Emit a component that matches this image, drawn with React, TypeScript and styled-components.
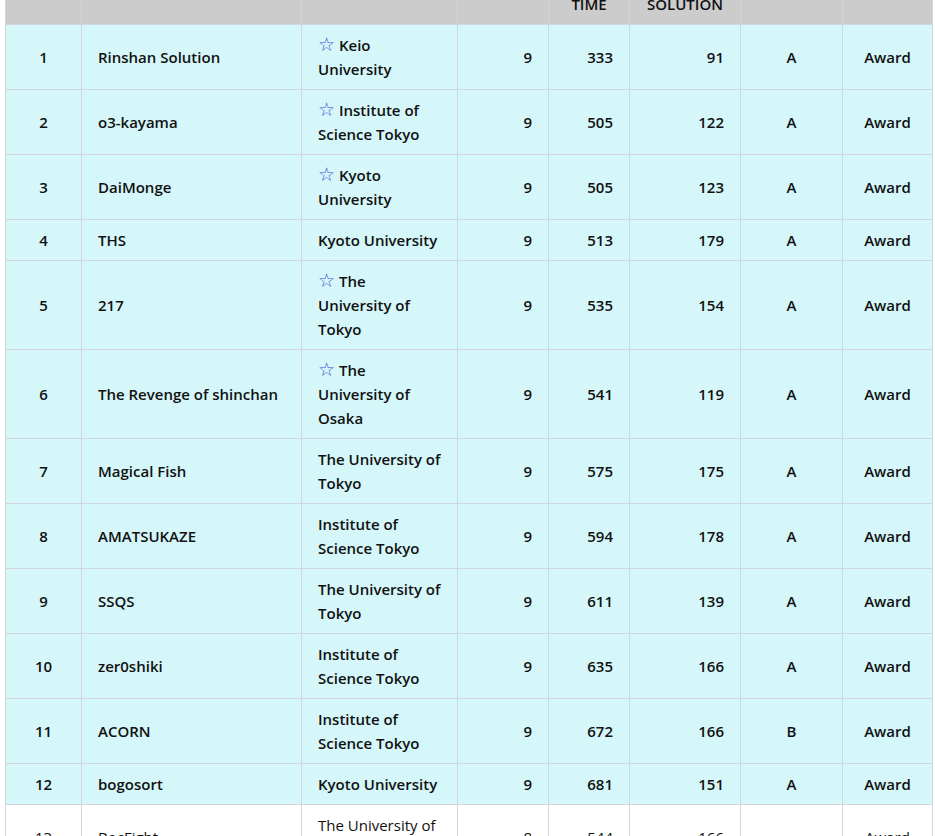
import React from "react";
import styled, { createGlobalStyle } from "styled-components";

const GlobalStyle = createGlobalStyle`
  html, body { margin: 0; padding: 0; background: #ffffff; }
  body {
    font-family: "Open Sans", "Noto Sans", sans-serif;
    font-size: 15px;
    color: #111111;
    overflow: hidden;
  }
`;

type Align = "left" | "right" | "center";

interface Team {
  rank: number;
  name: string;
  university: string;
  starred: boolean;
  solved: number;
  time: number;
  last: number;
  grade: string;
  award: string;
  highlight: boolean;
}

const teams: Team[] = [
  { rank: 1, name: "Rinshan Solution", university: "Keio University", starred: true, solved: 9, time: 333, last: 91, grade: "A", award: "Award", highlight: true },
  { rank: 2, name: "o3-kayama", university: "Institute of Science Tokyo", starred: true, solved: 9, time: 505, last: 122, grade: "A", award: "Award", highlight: true },
  { rank: 3, name: "DaiMonge", university: "Kyoto University", starred: true, solved: 9, time: 505, last: 123, grade: "A", award: "Award", highlight: true },
  { rank: 4, name: "THS", university: "Kyoto University", starred: false, solved: 9, time: 513, last: 179, grade: "A", award: "Award", highlight: true },
  { rank: 5, name: "217", university: "The University of Tokyo", starred: true, solved: 9, time: 535, last: 154, grade: "A", award: "Award", highlight: true },
  { rank: 6, name: "The Revenge of shinchan", university: "The University of Osaka", starred: true, solved: 9, time: 541, last: 119, grade: "A", award: "Award", highlight: true },
  { rank: 7, name: "Magical Fish", university: "The University of Tokyo", starred: false, solved: 9, time: 575, last: 175, grade: "A", award: "Award", highlight: true },
  { rank: 8, name: "AMATSUKAZE", university: "Institute of Science Tokyo", starred: false, solved: 9, time: 594, last: 178, grade: "A", award: "Award", highlight: true },
  { rank: 9, name: "SSQS", university: "The University of Tokyo", starred: false, solved: 9, time: 611, last: 139, grade: "A", award: "Award", highlight: true },
  { rank: 10, name: "zer0shiki", university: "Institute of Science Tokyo", starred: false, solved: 9, time: 635, last: 166, grade: "A", award: "Award", highlight: true },
  { rank: 11, name: "ACORN", university: "Institute of Science Tokyo", starred: false, solved: 9, time: 672, last: 166, grade: "B", award: "Award", highlight: true },
  { rank: 12, name: "bogosort", university: "Kyoto University", starred: false, solved: 9, time: 681, last: 151, grade: "A", award: "Award", highlight: true },
  { rank: 13, name: "BocFight", university: "The University of Tokyo", starred: false, solved: 8, time: 544, last: 166, grade: "", award: "Award", highlight: false },
];

const columns: { lines: string[]; width: number }[] = [
  { lines: ["RANK"], width: 76 },
  { lines: ["TEAM"], width: 220 },
  { lines: ["UNIVERSITY"], width: 156 },
  { lines: ["SOLVED"], width: 91 },
  { lines: ["TOTAL", "PENALTY", "TIME"], width: 81 },
  { lines: ["LAST", "ACCEPTED", "SOLUTION"], width: 111 },
  { lines: ["GRADE"], width: 102 },
  { lines: ["AWARD"], width: 90 },
];

const Page = styled.main`
  padding: 0 2px 0 5px;
`;

const Standings = styled.table`
  width: 928px;
  margin-top: -65px;
  border-collapse: collapse;
  table-layout: fixed;
`;

const HeadCell = styled.th`
  background: #cccccc;
  border: 1px solid #d4d4de;
  padding: 8px 16px;
  font-weight: 600;
  line-height: 24px;
  text-align: center;
  vertical-align: middle;
  white-space: nowrap;
`;

const BodyRow = styled.tr<{ $highlight: boolean }>`
  background: ${(p) => (p.$highlight ? "#d5f7f9" : "#ffffff")};
  font-weight: ${(p) => (p.$highlight ? 600 : 400)};
`;

const Cell = styled.td<{ $align: Align }>`
  border: 1px solid #d4d4de;
  padding: 8px 16px;
  line-height: 24px;
  text-align: ${(p) => p.$align};
  vertical-align: middle;
`;

const Star = styled.span`
  font-family: "DejaVu Sans", sans-serif;
  font-weight: 400;
  font-size: 19px;
  line-height: 0;
  color: #4a4ad8;
`;

export default function App() {
  return (
    <>
      <GlobalStyle />
      <Page>
        <Standings>
          <colgroup>
            {columns.map((c, i) => (
              <col key={i} style={{ width: c.width }} />
            ))}
          </colgroup>
          <thead>
            <tr>
              {columns.map((c, i) => (
                <HeadCell key={i}>
                  {c.lines.map((l, j) => (
                    <React.Fragment key={j}>
                      {j > 0 && <br />}
                      {l}
                    </React.Fragment>
                  ))}
                </HeadCell>
              ))}
            </tr>
          </thead>
          <tbody>
            {teams.map((t) => (
              <BodyRow key={t.rank} $highlight={t.highlight}>
                <Cell $align="center">{t.rank}</Cell>
                <Cell $align="left">{t.name}</Cell>
                <Cell $align="left">
                  {t.starred && <Star>☆</Star>}
                  {t.starred && " "}
                  {t.university}
                </Cell>
                <Cell $align="right">{t.solved}</Cell>
                <Cell $align="right">{t.time}</Cell>
                <Cell $align="right">{t.last}</Cell>
                <Cell $align="center">{t.grade}</Cell>
                <Cell $align="center">{t.award}</Cell>
              </BodyRow>
            ))}
          </tbody>
        </Standings>
      </Page>
    </>
  );
}
